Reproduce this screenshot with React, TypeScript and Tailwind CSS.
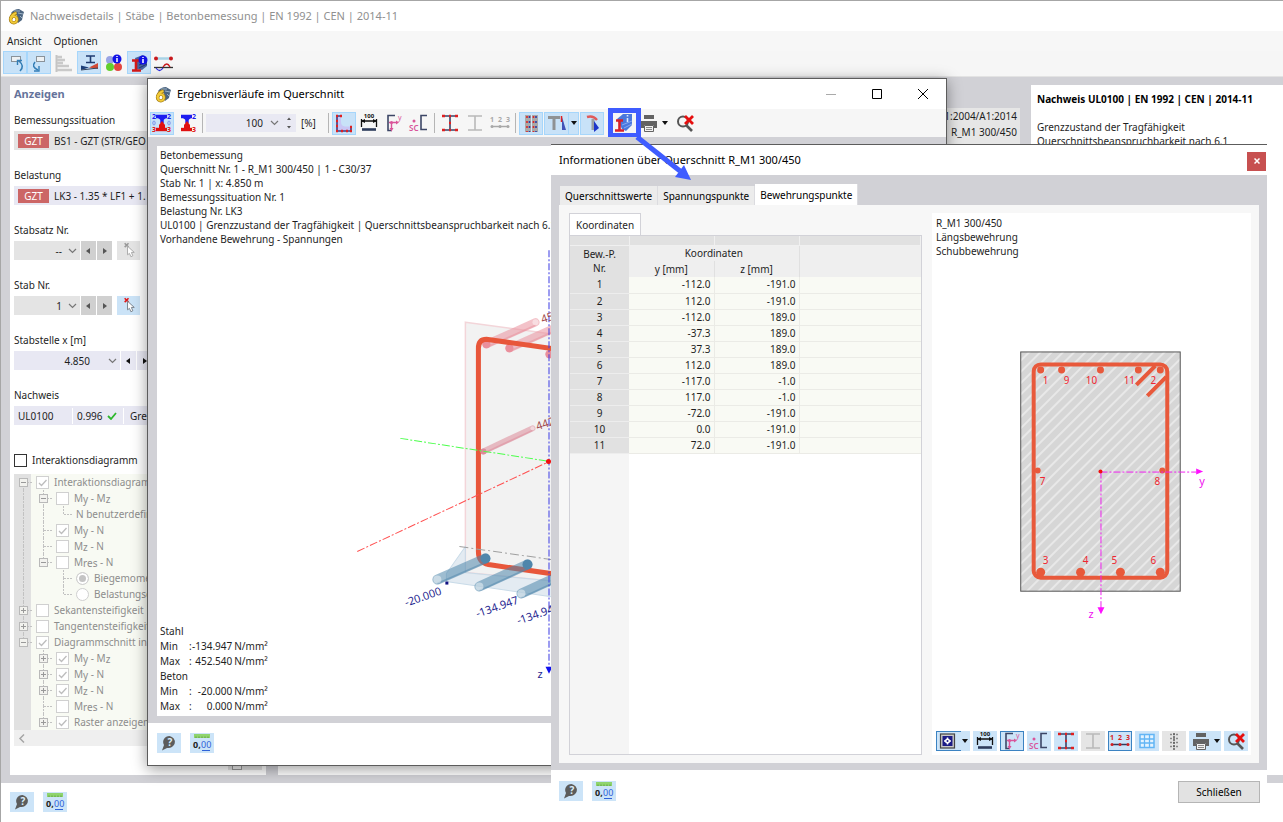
import { useState } from 'react';
import type { ReactNode } from 'react';
import clsx from 'clsx';

const FONT = "font-['Noto_Sans','Open_Sans',sans-serif]";

type Cell = 'minus' | 'plus' | 'line' | 'tee' | 'ell' | 'blank';

interface TreeRow {
  cells: Cell[];
  control?: 'checkbox' | 'radio';
  checked?: boolean;
  label: ReactNode;
  name: string;
  last?: boolean;
}

const sub = (text: string) => <span className="relative top-px">{text}</span>;

const myMz = <>M{sub('y')} - M{sub('z')}</>;
const myN = <>M{sub('y')} - N</>;
const mzN = <>M{sub('z')} - N</>;
const mresN = <>M{sub('res')} - N</>;

const TREE: TreeRow[] = [
  { cells: ['minus'], control: 'checkbox', checked: true, label: 'Interaktionsdiagram', name: 'tree-interaktion' },
  { cells: ['line', 'minus'], control: 'checkbox', label: myMz, name: 'tree-my-mz' },
  { cells: ['line', 'line', 'ell'], label: 'N benutzerdefin', name: 'tree-n' },
  { cells: ['line', 'tee'], control: 'checkbox', checked: true, label: myN, name: 'tree-my-n' },
  { cells: ['line', 'tee'], control: 'checkbox', label: mzN, name: 'tree-mz-n' },
  { cells: ['line', 'minus'], control: 'checkbox', label: mresN, name: 'tree-mres-n', last: true },
  { cells: ['line', 'blank', 'tee'], control: 'radio', checked: true, label: 'Biegemome', name: 'tree-biege' },
  { cells: ['line', 'blank', 'ell'], control: 'radio', label: 'Belastungse', name: 'tree-belast' },
  { cells: ['plus'], control: 'checkbox', label: 'Sekantensteifigkeit', name: 'tree-sekanten' },
  { cells: ['plus'], control: 'checkbox', label: 'Tangentensteifigkeit', name: 'tree-tangenten' },
  { cells: ['minus'], control: 'checkbox', checked: true, label: 'Diagrammschnitt in', name: 'tree-schnitt', last: true },
  { cells: ['blank', 'plus'], control: 'checkbox', checked: true, label: myMz, name: 'tree-s-my-mz' },
  { cells: ['blank', 'plus'], control: 'checkbox', checked: true, label: myN, name: 'tree-s-my-n' },
  { cells: ['blank', 'plus'], control: 'checkbox', checked: true, label: mzN, name: 'tree-s-mz-n' },
  { cells: ['blank', 'tee'], control: 'checkbox', label: mresN, name: 'tree-s-mres-n' },
  { cells: ['blank', 'plus'], control: 'checkbox', checked: true, label: 'Raster anzeigen', name: 'tree-raster', last: true },
];

const POINTS = [
  ['-112.0', '-191.0'],
  ['112.0', '-191.0'],
  ['-112.0', '189.0'],
  ['-37.3', '189.0'],
  ['37.3', '189.0'],
  ['112.0', '189.0'],
  ['-117.0', '-1.0'],
  ['117.0', '-1.0'],
  ['-72.0', '-191.0'],
  ['0.0', '-191.0'],
  ['72.0', '-191.0'],
];

/* ---------- icons, all on a 24 x 22 grid ---------- */

function Icon({ children }: { children: ReactNode }) {
  return (
    <svg viewBox="0 0 24 22" className="h-[22px] w-6 shrink-0" fill="none">
      {children}
    </svg>
  );
}

function Logo() {
  return (
    <svg viewBox="0 0 17 17" className="size-[17px] shrink-0" fill="none">
      <path d="M3 5 Q6 1 11 1 L16 4 L15 7 L14 12 L10 15 L9 7 L5 7 Z" fill="#4c6580" />
      <path d="M6 3 L12 3 M10 5 L15 6 M12 8 L14 10" stroke="#9db2c6" />
      <path d="M8.500 5 Q3.500 6 2.500 11.500" stroke="#a17a14" strokeWidth="3.600" />
      <circle cx="5.800" cy="11.500" r="3.300" stroke="#a17a14" strokeWidth="3.200" />
      <path d="M8.500 5 Q3.500 6 2.500 11.500" stroke="#f2cb38" strokeWidth="2.200" />
      <circle cx="5.800" cy="11.500" r="3.200" stroke="#f2cb38" strokeWidth="2" />
    </svg>
  );
}

const UndoIcon = () => (
  <Icon>
    <rect x="8.500" y="4.500" width="9" height="5" fill="#eef1f3" stroke="#8a9299" />
    <path d="M17 19 Q22 14 16 9" stroke="#347eb6" strokeWidth="1.600" />
    <path d="M19 8.500 H14.500 V13" stroke="#347eb6" strokeWidth="1.400" />
  </Icon>
);

const RedoIcon = () => (
  <Icon>
    <rect x="9.500" y="4.500" width="8" height="5" fill="#eef1f3" stroke="#8a9299" />
    <path d="M8 10 Q4 15 11 18" stroke="#347eb6" strokeWidth="1.600" />
    <path d="M12 14 V19 H7" stroke="#347eb6" strokeWidth="1.400" />
  </Icon>
);

const BarsIcon = () => (
  <Icon>
    <path d="M4.500 3 V20" stroke="#c4c4c4" strokeWidth="2" />
    <path d="M5 5 H10 M5 8 H13 M5 11 H11 M5 14 H17 M5 18 H20" stroke="#c9c9c9" strokeWidth="2.400" />
  </Icon>
);

const StressIcon = () => (
  <Icon>
    <path d="M9 4 H18 M9 10.500 H18 M13.500 4 V10.500" stroke="#1f3b70" strokeWidth="1.600" />
    <path d="M4 13.500 L12 15.500 L4 18 Z" fill="#1d3f78" />
    <path d="M12 15.500 L21 11 V17 Z" fill="#d24a35" />
    <path d="M4 18 L21 16" stroke="#33435d" />
  </Icon>
);

function InfoBadge({ x, y }: { x: number; y: number }) {
  return (
    <g>
      <circle cx={x} cy={y} r="4.500" fill="#1212e6" />
      <path d={`M${x} ${y - 1} V${y + 3} M${x} ${y - 3} V${y - 2}`} stroke="#fff" strokeWidth="1.500" />
    </g>
  );
}

const ColorsIcon = () => (
  <Icon>
    <circle cx="8" cy="8" r="4" fill="#9aa4e4" />
    <circle cx="8" cy="15" r="4" fill="#63cf2e" />
    <circle cx="16" cy="15" r="4" fill="#e2463f" />
    <InfoBadge x={15} y={7} />
  </Icon>
);

const SectionInfoIcon = () => (
  <Icon>
    <path d="M8 6 L16 3 L20 7 V14 L15 18 L10 17 Z" fill="#47639f" />
    <path d="M12 13 L20 10 M12 16 L20 12" stroke="#1f3870" />
    <path d="M5 8.500 H12 M5 18.500 H14 M9 8 V18" stroke="#d01818" strokeWidth="2.600" />
    <InfoBadge x={16} y={8} />
  </Icon>
);

const SectionBlueIcon = () => (
  <Icon>
    <path d="M5 7 L11 2 H20 V13 L14 19 L10 17 Z" fill="#4a78dd" />
    <path d="M10 13 L20 9 M12 16 L20 12" stroke="#88a9f2" />
    <path d="M15.500 6 V10 M15.500 3 V4.500" stroke="#dbe8ff" strokeWidth="1.600" />
    <path d="M4 8.500 H11 M3 18.500 H12 M7.500 9 V18" stroke="#d8202a" strokeWidth="2.600" />
  </Icon>
);

const CurveIcon = () => (
  <Icon>
    <path d="M4 6.500 H19" stroke="#a9d3e6" strokeWidth="2.500" />
    <circle cx="4" cy="6.500" r="2" fill="#c8191d" />
    <circle cx="19" cy="6.500" r="2" fill="#c8191d" />
    <path d="M2 15.500 H21" stroke="#333" strokeWidth="1.300" />
    <path d="M4 16 Q7.500 21 11 16" stroke="#2a2ae0" strokeWidth="1.300" />
    <path d="M11 15 Q15 9 18 15" stroke="#c8191d" strokeWidth="1.300" />
  </Icon>
);

function ProfileNumbersIcon({ both }: { both?: boolean }) {
  return (
    <Icon>
      <path d="M6 4.500 H17 M12 5 V11" stroke="#1c1cf0" strokeWidth="3.400" />
      <path d="M8 6 H16 L12 9 Z" fill="#1c1cf0" />
      <path d="M12 9 L15 13 V16 H9 V13 Z" fill="#e01010" />
      <path d="M6 17.500 H17" stroke="#e01010" strokeWidth="3.400" />
      <text x="17" y="7" fontSize="7" fontWeight="700" fill="#1c1cf0">2</text>
      <text x="17" y="20" fontSize="7" fontWeight="700" fill="#e01010">3</text>
      {both && (
        <>
          <text x="2" y="7" fontSize="7" fontWeight="700" fill="#1c1cf0">2</text>
          <text x="2" y="20" fontSize="7" fontWeight="700" fill="#e01010">3</text>
          <ellipse cx="4" cy="11" rx="1.200" ry="2" stroke="#7c93ec" />
          <ellipse cx="19" cy="11" rx="1.200" ry="2" stroke="#7c93ec" />
        </>
      )}
    </Icon>
  );
}

const CornerIcon = () => (
  <Icon>
    <path d="M5 4 H9 V10 Q9 14 13 14.500 H19 V19 H5 Z" fill="#c9c6f5" />
    <path d="M9 4 H5 V19 H19 V15" stroke="#3c3c80" strokeWidth="1.600" />
    <path
      d="M4 4 H6 M4 9 H6 M4 14 H6 M4 19 H6 M9 19 H11 M14 19 H16 M18 19 H20 M18 15 H20 M8 4 H10"
      stroke="#e02020"
      strokeWidth="2.400"
    />
  </Icon>
);

const DimensionIcon = () => (
  <Icon>
    <text x="12" y="6" fontSize="6" fontWeight="700" textAnchor="middle" fill="#111">100</text>
    <path d="M4 9 H20 M4.500 7 V15 M19.500 7 V15" stroke="#111" strokeWidth="1.300" />
    <path d="M4 9 L8 7 V11 Z M20 9 L16 7 V11 Z" fill="#111" />
    <path d="M5 17.500 H19" stroke="#2e3c5c" strokeWidth="2.600" />
  </Icon>
);

const AxesIcon = () => (
  <Icon>
    <path d="M13 3.500 H6 V18.500 H10" stroke="#3c4666" strokeWidth="1.600" />
    <path d="M7 10.500 H15 M9.500 10 V17" stroke="#d9559a" strokeWidth="1.400" />
    <path d="M14 8.500 L17 10.500 L14 12.500 Z M7.500 16 H11.500 L9.500 19.500 Z" fill="#d9559a" />
    <circle cx="9.500" cy="10.500" r="1.500" fill="#d9559a" />
    <text x="16" y="8" fontSize="7" fill="#d9559a">y</text>
  </Icon>
);

const ShearCenterIcon = () => (
  <Icon>
    <path d="M20 3.500 H14 V17.500 H20" stroke="#3c4666" strokeWidth="1.600" />
    <circle cx="7" cy="9" r="1.500" fill="#d9559a" />
    <text x="2" y="19" fontSize="8" fontWeight="600" fill="#d9559a">SC</text>
  </Icon>
);

function BeamIcon({ gray }: { gray?: boolean }) {
  return (
    <Icon>
      <path d="M5 4 H19 M5 18 H19 M12 4 V18" stroke={gray ? '#b9b9b9' : '#3a4468'} strokeWidth="1.600" />
      {!gray && (
        <path
          d="M4 4 H7 M11 4 H13 M17 4 H20 M4 18 H7 M11 18 H13 M17 18 H20 M11 11 H13"
          stroke="#e02020"
          strokeWidth="2.600"
        />
      )}
    </Icon>
  );
}

function NumbersIcon({ gray }: { gray?: boolean }) {
  const color = gray ? '#a8a8a8' : '#d61f1f';
  return (
    <Icon>
      <text x="2" y="10" fontSize="7" fontWeight="700" fill={color}>1</text>
      <text x="10" y="10" fontSize="7" fontWeight="700" fill={color}>2</text>
      <text x="18" y="10" fontSize="7" fontWeight="700" fill={color}>3</text>
      <path d="M4 14.500 H20" stroke={gray ? '#a8a8a8' : '#2e3c5c'} strokeWidth="1.500" />
      <circle cx="4" cy="14.500" r="1.500" fill={color} />
      <circle cx="12" cy="14.500" r="1.500" fill={color} />
      <circle cx="20" cy="14.500" r="1.500" fill={color} />
    </Icon>
  );
}

const RebarIcon = () => (
  <Icon>
    <path d="M6 3 H12 V20 H6 Z M13 3 H19 V20 H13 Z" fill="#a9a9a9" />
    <path d="M8 4 V20 M14.500 4 V20" stroke="#e02626" strokeWidth="1.600" strokeDasharray="2 3" />
    <path d="M10.500 4 V20 M17 4 V20" stroke="#2c3ea6" strokeWidth="1.600" strokeDasharray="2 3" />
    <path d="M12.500 3 V20" stroke="#d8eafa" />
  </Icon>
);

const TeeIcon = () => (
  <Icon>
    <path d="M4 5.500 H16 M10 6 V18" stroke="#8f9294" strokeWidth="3" />
    <path d="M18 5 L22 18 H18 Z" fill="#4052b8" />
    <path d="M17.500 4 V10" stroke="#e02020" strokeWidth="1.500" />
  </Icon>
);

const HammerIcon = () => (
  <Icon>
    <path d="M7 5 Q13 3 17 8" stroke="#e05a5a" strokeWidth="2.400" />
    <path d="M13 7 V18" stroke="#999fa3" strokeWidth="3" />
    <path d="M14 9 L19 16 L14 20 Z" fill="#1d35c9" />
  </Icon>
);

const PrinterIcon = () => (
  <Icon>
    <path d="M7 3 H17 V7 H7 Z M4 9 H20 V16 H17 V13 H7 V16 H4 Z" fill="#636363" />
    <path d="M7.500 13.500 H16.500 V19.500 H7.500 Z" fill="#f2f2f2" stroke="#636363" />
    <path d="M9 15.500 H15 M9 17.500 H15" stroke="#8a8a8a" />
  </Icon>
);

const SearchXIcon = () => (
  <Icon>
    <circle cx="10" cy="9.500" r="5" stroke="#555" strokeWidth="2" />
    <path d="M13.500 13.500 L19 19" stroke="#555" strokeWidth="2.600" />
    <path d="M12 4 L20 12 M20 4 L12 12" stroke="#e60f0f" strokeWidth="2.800" />
  </Icon>
);

const SelectBoxIcon = () => (
  <Icon>
    <rect x="3.500" y="4" width="14" height="14" fill="#c9c9c9" stroke="#444" strokeWidth="1.200" />
    <rect x="5.500" y="6" width="10" height="10" fill="#1c1c86" />
    <path d="M10.500 7.500 V14.500 M7 11 H14" stroke="#fff" strokeWidth="1.500" />
    <circle cx="10.500" cy="11" r="2.500" fill="#fff" />
    <circle cx="10.500" cy="11" r="1" fill="#1c1c86" />
  </Icon>
);

const GridIcon = () => (
  <Icon>
    <rect x="5" y="4.500" width="14" height="13" fill="#e3f3ff" stroke="#62b5f5" strokeWidth="1.500" />
    <path d="M9.500 4 V18 M14.500 4 V18 M5 9 H19 M5 13 H19" stroke="#62b5f5" strokeWidth="1.300" />
  </Icon>
);

const DotsColumnIcon = () => (
  <Icon>
    <path d="M8 4.500 H16 M8 8.500 H16 M8 12.500 H16 M8 16.500 H16" stroke="#8a8a8a" strokeWidth="1.500" strokeDasharray="2 1" />
    <path d="M12 3 V20" stroke="#5f5f5f" strokeWidth="1.500" strokeDasharray="2 1" />
  </Icon>
);

const HelpIcon = () => (
  <Icon>
    <path d="M12.500 4 A6.500 6 0 1 1 10 16 L5 18.500 L7 13 A6.500 6 0 0 1 12.500 4 Z" fill="#5c5c5c" />
    <text x="13" y="14" fontSize="10" fontWeight="700" textAnchor="middle" fill="#d9ecfb">?</text>
  </Icon>
);

const DecimalsIcon = () => (
  <Icon>
    <rect x="4" y="2" width="16" height="4" fill="#8fd46d" />
    <path d="M6 4.500 V6 M9 4.500 V6 M12 4.500 V6 M15 4.500 V6 M18 4.500 V6" stroke="#5c9c42" />
    <text x="3" y="16" fontSize="9" fontWeight="700" fill="#222">0,</text>
    <text x="11" y="16" fontSize="9" fill="#2f62d8">00</text>
    <path d="M12 18.500 H20" stroke="#2f62d8" />
  </Icon>
);

const Caret = () => (
  <svg viewBox="0 0 8 5" className="h-[5px] w-2 shrink-0">
    <path d="M1 0 H7 L4 4 Z" fill="#111" />
  </svg>
);

const Chevron = () => (
  <svg viewBox="0 0 9 6" className="h-1.5 w-[9px] shrink-0" fill="none">
    <path d="M1 1 L4.500 4.500 L8 1" stroke="#777" strokeWidth="1.200" />
  </svg>
);

function Pointer({ active }: { active?: boolean }) {
  return (
    <svg viewBox="0 0 24 19" className="h-[19px] w-[23px]" fill="none">
      <path d="M8 2 L12 6 M12 2 L8 6" stroke={active ? '#e01818' : '#999'} strokeWidth="1.600" />
      <path
        d="M11 5 V14 L13 12.500 L14.500 16 L16.500 15 L15 11.500 L18 11.500 Z"
        fill="#fff"
        stroke={active ? '#78818a' : '#a9a9a9'}
      />
    </svg>
  );
}

/* ---------- small building blocks ---------- */

interface ToolProps {
  label: string;
  on?: boolean;
  children: ReactNode;
}

function Tool({ label, on, children }: ToolProps) {
  return (
    <button
      type="button"
      aria-label={label}
      className={clsx(
        'flex h-[23px] shrink-0 items-center justify-center',
        on && 'bg-[#c8e2f8] outline outline-1 -outline-offset-1 outline-[#a6d6fb]'
      )}
    >
      {children}
    </button>
  );
}

const Divider = () => <span className="mx-[3px] h-5 w-px shrink-0 bg-[#b5b5b5]" />;

function FootTools() {
  return (
    <div className="flex gap-[9px]">
      <button type="button" aria-label="Hilfe" className="flex h-5 w-6 items-center bg-[#cce4f8]">
        <HelpIcon />
      </button>
      <button type="button" aria-label="Dezimalstellen" className="flex h-5 w-6 items-center bg-[#cce4f8]">
        <DecimalsIcon />
      </button>
    </div>
  );
}

function Stepper({ dark }: { dark?: boolean }) {
  const cls = clsx('flex h-[19px] w-[15px] items-center justify-center', dark ? 'bg-[#e8e8f3]' : 'bg-[#d0d0d0]');
  const fill = dark ? '#111' : '#555';
  return (
    <>
      <button type="button" aria-label="Zurück" className={cls}>
        <svg viewBox="0 0 5 8" className="h-2 w-[5px]"><path d="M4 1 V7 L0 4 Z" fill={fill} /></svg>
      </button>
      <button type="button" aria-label="Weiter" className={cls}>
        <svg viewBox="0 0 5 8" className="h-2 w-[5px]"><path d="M1 1 V7 L5 4 Z" fill={fill} /></svg>
      </button>
    </>
  );
}

function Field({ label, children }: { label: string; children: ReactNode }) {
  return (
    <div className="mb-[15px]" role="group" aria-label={label}>
      <div className="h-[21px] leading-5">{label}</div>
      <div className="flex h-[19px] items-center gap-px">{children}</div>
    </div>
  );
}

function Combo({ value, className }: { value: string; className: string }) {
  return (
    <button type="button" className={clsx('flex h-[19px] items-center justify-end gap-1.5', className)}>
      {value}
      <Chevron />
    </button>
  );
}

function LoadCase({ tone, text }: { tone: string; text: string }) {
  return (
    <button type="button" className={clsx('flex h-[19px] w-full items-center gap-[5px] pl-1', tone)}>
      <span className="h-[14px] w-[31px] bg-[#cc6666] text-center leading-[14px] text-white">GZT</span>
      {text}
    </button>
  );
}

function TreeCell({ kind, first, last }: { kind: Cell; first: boolean; last?: boolean }) {
  const box = kind === 'minus' || kind === 'plus';
  return (
    <svg viewBox="0 0 20 16" className="h-4 w-5 shrink-0" fill="none" stroke="#c2c2c2">
      {kind !== 'blank' && !(box && first) && <path d="M9.500 0 V8" strokeDasharray="2 1" />}
      {kind !== 'blank' && kind !== 'ell' && !last && <path d="M9.500 8 V16" strokeDasharray="2 1" />}
      {kind !== 'blank' && kind !== 'line' && <path d="M10 8.500 H19" strokeDasharray="2 1" />}
      {box && <rect x="5.500" y="4.500" width="8" height="8" fill="#f2f2ee" stroke="#b9b9b9" />}
      {box && <path d="M7 8.500 H12" stroke="#999" />}
      {kind === 'plus' && <path d="M9.500 6 V11" stroke="#999" />}
    </svg>
  );
}

function Tick() {
  return (
    <svg viewBox="0 0 13 13" className="pointer-events-none absolute inset-0 size-[13px]" fill="none">
      <path d="M3 7 L5.500 9.500 L10.500 4" stroke="#bdbdbd" strokeWidth="1.300" />
    </svg>
  );
}

function Tree() {
  return (
    <ul className="bg-[linear-gradient(to_right,#e1e1e1_17px,#f8faf3_17px)] text-[#8d8d8d]">
      {TREE.map((row, i) => (
        <li key={row.name} className="flex h-4 items-center overflow-hidden whitespace-nowrap">
          {row.cells.map((kind, c) => (
            <TreeCell
              key={c}
              kind={kind}
              first={i === 0}
              last={(row.last && c === row.cells.length - 1) || kind === 'ell'}
            />
          ))}
          {row.control && (
            <span className="relative ml-0.5 mr-[5px] size-[13px] shrink-0">
              <input
                id={row.name}
                type={row.control}
                name={row.control === 'radio' ? 'ebene' : row.name}
                defaultChecked={row.checked}
                disabled
                className={clsx(
                  'block size-[13px] appearance-none border border-[#d0d0d0] bg-white',
                  row.control === 'radio' && 'rounded-full checked:shadow-[inset_0_0_0_2px_#fff] checked:bg-[#c4c4c4]'
                )}
              />
              {row.control === 'checkbox' && row.checked && <Tick />}
            </span>
          )}
          {row.control ? <label htmlFor={row.name}>{row.label}</label> : <span className="ml-0.5">{row.label}</span>}
        </li>
      ))}
    </ul>
  );
}

/* ---------- main window ---------- */

function SidePanel() {
  const [interaction, setInteraction] = useState(false);
  return (
    <section className="flex w-64 shrink-0 flex-col bg-white pl-1">
      <h2 className="h-[25px] pt-px text-[11px] font-bold leading-4 text-[#65739b]">Anzeigen</h2>
      <Field label="Bemessungssituation">
        <LoadCase tone="bg-[#e4e4e4]" text="BS1 - GZT (STR/GEO" />
      </Field>
      <Field label="Belastung">
        <LoadCase tone="bg-[#e8e8f3]" text="LK3 - 1.35 * LF1 + 1." />
      </Field>
      <Field label="Stabsatz Nr.">
        <Combo value="--" className="w-[66px] bg-[#e4e4e4] pr-[3px]" />
        <Stepper />
        <button type="button" aria-label="Stabsatz wählen" className="ml-1 bg-[#e4e4e4]"><Pointer /></button>
      </Field>
      <Field label="Stab Nr.">
        <Combo value="1" className="w-[66px] bg-[#e4e4e4] pr-[3px]" />
        <Stepper />
        <button type="button" aria-label="Stab wählen" className="ml-1 bg-[#cbe3f7]"><Pointer active /></button>
      </Field>
      <Field label="Stabstelle x [m]">
        <button type="button" className="flex h-[19px] w-[106px] items-center justify-end gap-[18px] bg-[#e8e8f3] pr-[3px]">
          4.850
          <Chevron />
        </button>
        <Stepper dark />
      </Field>
      <Field label="Nachweis">
        <div className="flex h-[19px] w-full items-center bg-[#e8e8f3]">
          <span className="w-[58px] pl-1">UL0100</span>
          <span className="flex h-4 w-[52px] items-center gap-1 border-x border-white pl-1">
            0.996
            <svg viewBox="0 0 10 8" className="h-2 w-2.5" fill="none">
              <path d="M1 4 L4 7 L9 1" stroke="#2db82d" strokeWidth="1.800" />
            </svg>
          </span>
          <span className="pl-1.5">Gre</span>
        </div>
      </Field>
      <div className="mb-1.5 mt-3 flex h-4 items-center gap-[5px]">
        <input
          id="interaktion"
          type="checkbox"
          checked={interaction}
          onChange={(e) => setInteraction(e.target.checked)}
          className="size-[13px] appearance-none border border-[#333] bg-white checked:bg-[#333]"
        />
        <label htmlFor="interaktion">Interaktionsdiagramm</label>
      </div>
      <Tree />
      <div className="h-4 bg-[#efefef] pl-1">
        <svg viewBox="0 0 8 16" className="h-4 w-2" fill="none">
          <path d="M6 4.500 L2 8.500 L6 12.500" stroke="#a5a5a5" strokeWidth="1.500" />
        </svg>
      </div>
      <div className="mb-[5px] mr-1 mt-auto flex h-5 w-[34px] items-end self-end bg-[#e2e2e2] pl-1">
        <span className="h-4 w-2.5 border border-[#999] bg-[#eee]" />
      </div>
    </section>
  );
}

function MainWindow() {
  return (
    <div className="flex h-screen flex-col border-l border-t border-[#a6a6a6] bg-white">
      <header className="flex h-[30px] shrink-0 items-center gap-[5px] pl-[7px] text-[11px] text-[#909090]">
        <Logo />
        <h1>Nachweisdetails | Stäbe | Betonbemessung | EN 1992 | CEN | 2014-11</h1>
      </header>
      <nav className="flex h-5 shrink-0 items-center gap-3 bg-[#f7f7f7] pl-1.5">
        <button type="button">Ansicht</button>
        <button type="button">Optionen</button>
      </nav>
      <div className="flex h-[26px] shrink-0 items-start gap-px border-b border-[#e3e3e3] bg-[#f6f6f6] pl-0.5">
        <div className="flex">
          <Tool label="Zurück" on><UndoIcon /></Tool>
          <Tool label="Vor" on><RedoIcon /></Tool>
        </div>
        <Tool label="Balken"><BarsIcon /></Tool>
        <Tool label="Spannungsverlauf" on><StressIcon /></Tool>
        <Tool label="Farben"><ColorsIcon /></Tool>
        <Tool label="Querschnittsinfo" on><SectionInfoIcon /></Tool>
        <Tool label="Verlauf"><CurveIcon /></Tool>
      </div>
      <main className="flex min-h-0 flex-1 bg-[#d1d1d6] pb-2 pl-[9px] pt-2">
        <SidePanel />
        <section className="ml-3 mr-[11px] flex min-w-0 flex-1 flex-col">
          <div className="mb-6 mt-[23px] bg-[#e6e6e6] pb-5 pr-[3px] text-right leading-4">
            <div>1:2004/A1:2014</div>
            <div>R_M1 300/450</div>
          </div>
          <div className="flex-1 bg-white" />
        </section>
        <section className="w-[252px] shrink-0 bg-white pl-1.5 pt-1.5 leading-[14px]">
          <h2 className="mb-[13px] font-bold leading-4 text-black">Nachweis UL0100 | EN 1992 | CEN | 2014-11</h2>
          <p>Grenzzustand der Tragfähigkeit</p>
          <p>Querschnittsbeanspruchbarkeit nach 6.1</p>
        </section>
      </main>
      <footer className="h-[39px] shrink-0 pl-[9px] pt-[9px]">
        <FootTools />
      </footer>
    </div>
  );
}

/* ---------- stress window ---------- */

function Rod({ x, y, dx, dy, color, r = 5 }: {
  x: number; y: number; dx: number; dy: number; color: string; r?: number;
}) {
  return (
    <g>
      <path d={`M${x} ${y} L${x + dx} ${y + dy}`} stroke={color} strokeWidth={r * 2} strokeOpacity="0.550" strokeLinecap="round" />
      <path d={`M${x} ${y + r - 1} L${x + dx} ${y + dy + r - 1}`} stroke={color} strokeOpacity="0.500" strokeWidth="1.500" />
      <circle cx={x} cy={y} r={r} fill={color} />
      <circle cx={x + dx} cy={y + dy} r={r - 1} fill="#fff" fillOpacity="0.450" />
    </g>
  );
}

function StressPlot() {
  return (
    <svg viewBox="157 146 780 570" preserveAspectRatio="xMinYMin slice" className="absolute inset-0 size-full" fill="none">
      <path d="M465 322 L640 346 V589 L465 572 Z" fill="#f2f2f2" stroke="#f3d5d9" strokeWidth="1.500" />
      <path d="M465 546 L446 573 V581 L640 609 V589 L465 572 Z" fill="#dce6ef" fillOpacity="0.800" stroke="#c9dbe8" />
      <Rod x={486} y={344} dx={49} dy={-22} color="#ea8f9c" r={4} />
      <Rod x={509} y={348} dx={49} dy={-22} color="#ea8f9c" r={4} />
      <Rod x={549} y={354} dx={49} dy={-22} color="#ea8f9c" r={4} />
      <path d="M640 361 L486 339 Q478 339 478 348 V551 Q478 562 488 564 L640 586" stroke="#e8563a" strokeWidth="5" />
      <Rod x={483} y={451} dx={49} dy={-23} color="#dd8a99" r={3} />
      <path d="M459 546 L600 566" stroke="#a0a0a0" strokeDasharray="9 3 2 3" />
      <Rod x={485} y={558} dx={-48} dy={21} color="#4f86ab" />
      <Rod x={527} y={564} dx={-48} dy={22} color="#4f86ab" />
      <Rod x={569} y={571} dx={-48} dy={22} color="#4f86ab" />
      <rect x="445" y="581" width="3" height="3" fill="#101080" />
      <path d="M400 438 L549 461" stroke="#4cff4c" strokeDasharray="8 2 2 2" />
      <path d="M357 551 L549 461" stroke="#ff5050" strokeDasharray="8 2 2 2" />
      <path d="M548.500 250 V668" stroke="#3a3ae4" strokeDasharray="7 2 2 2" />
      <path d="M545 666 H552 L548.500 673 Z" fill="#1212ee" />
      <circle cx="548" cy="461" r="2.500" fill="#f01010" />
      <g fontSize="11" fill="#1f1f90">
        <text transform="translate(406 606) rotate(-19)">-20.000</text>
        <text transform="translate(477 617) rotate(-19)">-134.947</text>
        <text transform="translate(518 624) rotate(-19)">-134.947</text>
        <text x="537" y="677">z</text>
      </g>
      <g fontSize="11" fill="#a04848">
        <text transform="translate(542 323) rotate(-19)">452</text>
        <text transform="translate(537 430) rotate(-19)">442</text>
      </g>
    </svg>
  );
}

function StressValue({ name, value }: { name: string; value: string }) {
  return (
    <tr className="h-[15px]">
      <th scope="row" className="w-[29px] p-0 text-left font-normal">{name}</th>
      <td className="p-0">:</td>
      <td className="w-10 p-0 text-right">{value}</td>
      <td className="p-0 pl-0.5">N/mm²</td>
    </tr>
  );
}

function StressWindow() {
  return (
    <section className="absolute left-[147px] top-[78px] flex h-[688px] w-[800px] flex-col border border-[#5c5c5c] bg-white shadow-[0_3px_14px_rgba(0,0,0,0.4)]">
      <header className="flex h-[30px] shrink-0 items-center gap-[5px] pl-[7px] pr-[18px] text-[11px] text-black">
        <Logo />
        <h2 className="mr-auto">Ergebnisverläufe im Querschnitt</h2>
        <div className="flex gap-9">
          <button type="button" aria-label="Minimieren">
            <svg viewBox="0 0 10 10" className="size-2.5"><path d="M0 5.500 H10" stroke="#aaa" /></svg>
          </button>
          <button type="button" aria-label="Maximieren">
            <svg viewBox="0 0 10 10" className="size-2.5" fill="none"><path d="M0.500 0.500 H9.500 V9.500 H0.500 Z" stroke="#000" /></svg>
          </button>
          <button type="button" aria-label="Schließen">
            <svg viewBox="0 0 10 10" className="size-2.5"><path d="M0 0 L10 10 M10 0 L0 10" stroke="#000" /></svg>
          </button>
        </div>
      </header>
      <div className="flex h-[28px] shrink-0 items-center bg-[#f6f6f6] pl-0.5">
        <div className="flex gap-px">
          <Tool label="Werte beidseitig" on><ProfileNumbersIcon both /></Tool>
          <Tool label="Werte einseitig"><ProfileNumbersIcon /></Tool>
        </div>
        <Divider />
        <button type="button" className="flex h-[18px] w-[76px] items-center justify-end gap-[7px] bg-[#e9e9f3] pr-[3px]">
          100
          <Chevron />
        </button>
        <button type="button" aria-label="Wert ändern" className="flex h-[18px] w-[14px] items-center justify-center bg-[#e9e9f3]">
          <svg viewBox="0 0 6 12" className="h-3 w-1.5"><path d="M1 3 L3 0.500 L5 3 Z M1 9 L3 11.500 L5 9 Z" fill="#555" /></svg>
        </button>
        <span className="ml-[5px] mr-[9px]">[%]</span>
        <Divider />
        <div className="flex gap-px">
          <Tool label="Kontur" on><CornerIcon /></Tool>
          <Tool label="Maße"><DimensionIcon /></Tool>
          <Tool label="Hauptachsen"><AxesIcon /></Tool>
          <Tool label="Schubmittelpunkt"><ShearCenterIcon /></Tool>
        </div>
        <Divider />
        <div className="flex gap-px">
          <Tool label="Profil rot"><BeamIcon /></Tool>
          <Tool label="Profil grau"><BeamIcon gray /></Tool>
          <Tool label="Nummerierung"><NumbersIcon gray /></Tool>
        </div>
        <Divider />
        <div className="flex gap-px">
          <Tool label="Bewehrung" on><RebarIcon /></Tool>
          <Tool label="Spannungen" on>
            <TeeIcon />
            <span className="flex h-full items-center border-l border-[#a6d6fb] px-px"><Caret /></span>
          </Tool>
          <Tool label="Dehnungen" on><HammerIcon /></Tool>
        </div>
        <div className="ml-1 flex h-[30px] w-[33px] shrink-0 items-center justify-center border-[5px] border-[#3f5cff]">
          <Tool label="Informationen über Querschnitt"><SectionBlueIcon /></Tool>
        </div>
        <Tool label="Drucken"><span className="-ml-1 flex items-center"><PrinterIcon /></span><Caret /></Tool>
        <span className="w-1" />
        <Tool label="Ansicht zurücksetzen"><SearchXIcon /></Tool>
      </div>
      <div className="flex min-h-0 flex-1 bg-[#d1d1d6] pb-[7px] pl-[9px] pr-2 pt-[9px]">
        <div className="relative flex flex-1 flex-col justify-between overflow-hidden bg-white pl-[3px] pt-0.5">
          <StressPlot />
          <div className="relative leading-[14px]">
            <p>Betonbemessung</p>
            <p>Querschnitt Nr. 1 - R_M1 300/450 | 1 - C30/37</p>
            <p>Stab Nr. 1 | x: 4.850 m</p>
            <p>Bemessungssituation Nr. 1</p>
            <p>Belastung Nr. LK3</p>
            <p>UL0100 | Grenzzustand der Tragfähigkeit | Querschnittsbeanspruchbarkeit nach 6.1</p>
            <p>Vorhandene Bewehrung - Spannungen</p>
          </div>
          <table className="relative mb-0.5 w-28 border-collapse whitespace-nowrap leading-[15px]">
            <tbody>
              <tr><th scope="rowgroup" colSpan={4} className="p-0 text-left font-normal">Stahl</th></tr>
              <StressValue name="Min" value="-134.947" />
              <StressValue name="Max" value="452.540" />
              <tr><th scope="rowgroup" colSpan={4} className="p-0 text-left font-normal">Beton</th></tr>
              <StressValue name="Min" value="-20.000" />
              <StressValue name="Max" value="0.000" />
            </tbody>
          </table>
        </div>
      </div>
      <footer className="h-[42px] shrink-0 pl-[9px] pt-2.5">
        <FootTools />
      </footer>
    </section>
  );
}

/* ---------- section info window ---------- */

const BARS = [
  { n: 1, x: 1041, y: 370, r: 3.5, tx: 1046, ty: 384 },
  { n: 9, x: 1062, y: 370, r: 3.5, tx: 1067, ty: 384 },
  { n: 10, x: 1101, y: 370, r: 3.5, tx: 1092, ty: 384 },
  { n: 11, x: 1139, y: 370, r: 3.5, tx: 1130, ty: 384 },
  { n: 2, x: 1161, y: 370, r: 3.5, tx: 1154, ty: 384 },
  { n: 7, x: 1038, y: 471, r: 3, tx: 1043, ty: 485 },
  { n: 8, x: 1163, y: 471, r: 3, tx: 1158, ty: 485 },
  { n: 3, x: 1041, y: 573, r: 4.5, tx: 1046, ty: 565 },
  { n: 4, x: 1081, y: 573, r: 4.5, tx: 1086, ty: 565 },
  { n: 5, x: 1121, y: 573, r: 4.5, tx: 1115, ty: 565 },
  { n: 6, x: 1161, y: 573, r: 4.5, tx: 1154, ty: 565 },
];

function SectionPlot() {
  return (
    <svg viewBox="932 261 320 469" className="min-h-0 w-full flex-1" fill="none">
      <defs>
        <pattern id="hatch" width="8" height="8" patternUnits="userSpaceOnUse" patternTransform="rotate(45)">
          <rect width="8" height="8" fill="#d6d6d6" />
          <path d="M1 0 V8" stroke="#f2f2f2" strokeWidth="1.300" />
        </pattern>
      </defs>
      <rect x="1021" y="352" width="160" height="240" fill="url(#hatch)" stroke="#555" />
      <rect x="1034" y="364.500" width="134" height="214" rx="7" stroke="#e8593b" strokeWidth="4" />
      <path d="M1156 366 L1137 385 M1167 377 L1148 396" stroke="#e8593b" strokeWidth="4" />
      {BARS.map((bar) => (
        <circle key={bar.n} cx={bar.x} cy={bar.y} r={bar.r} fill="#e8593b" />
      ))}
      <g fontSize="10" fill="#f02530" textAnchor="middle">
        {BARS.map((bar) => (
          <text key={bar.n} x={bar.tx} y={bar.ty}>{bar.n}</text>
        ))}
      </g>
      <path d="M1101 472.500 H1197 M1101.500 472 V609" stroke="#f020f0" strokeDasharray="7 2 2 2" />
      <path d="M1197 469 V475 L1204 472 Z M1098 608 H1105 L1101.500 615 Z" fill="#ff10ff" />
      <circle cx="1101" cy="472" r="2" fill="#f01010" />
      <g fontSize="11" fill="#f010f0">
        <text x="1200" y="485">y</text>
        <text x="1089" y="619">z</text>
      </g>
    </svg>
  );
}

function SmallTool({ label, framed, gray, children }: {
  label: string; framed?: boolean; gray?: boolean; children: ReactNode;
}) {
  return (
    <button
      type="button"
      aria-label={label}
      className={clsx(
        'flex h-5 shrink-0 items-center justify-center overflow-hidden',
        gray ? 'bg-[#e5e5e5]' : 'bg-[#cce4f8]',
        framed && 'outline outline-1 -outline-offset-1 outline-[#3c83c2]'
      )}
    >
      {children}
    </button>
  );
}

function CoordinateTable() {
  const head = 'border-r border-[#e0e0e0] bg-[#efefef] p-0 text-center font-normal';
  const cell = 'border-b border-r border-[#ebebe6] bg-[#f9faf4] p-0 pr-[3px] text-right';
  return (
    <div className="flex min-h-0 flex-1 flex-col border border-[#d2d2d8] bg-[linear-gradient(to_right,#f5f5f5_59px,#fff_59px)]">
      <table className="w-full table-fixed border-collapse">
        <colgroup>
          <col className="w-[59px]" />
          <col className="w-[85px]" />
          <col className="w-[85px]" />
          <col />
        </colgroup>
        <thead>
          <tr className="h-[9px] bg-[#e1e1e1]">
            {[0, 1, 2, 3].map((c) => <td key={c} className="border-r border-b border-[#f0f0f0] p-0" />)}
          </tr>
          <tr className="h-4 leading-[15px]">
            <th scope="col" rowSpan={2} className="bg-[#e1e1e1] p-0 text-center font-normal leading-[14px]">
              Bew.-P.<br />Nr.
            </th>
            <th scope="colgroup" colSpan={2} className={head}>Koordinaten</th>
            <td rowSpan={2} className="bg-[#efefef] p-0" />
          </tr>
          <tr className="h-4 leading-[15px]">
            <th scope="col" className={head}>y [mm]</th>
            <th scope="col" className={head}>z [mm]</th>
          </tr>
        </thead>
        <tbody>
          {POINTS.map(([y, z], i) => (
            <tr key={i} className="h-4 leading-[15px]">
              <th scope="row" className="border-b border-[#ededed] bg-[#e1e1e1] p-0 text-center font-normal">{i + 1}</th>
              <td className={cell}>{y}</td>
              <td className={cell}>{z}</td>
              <td className="border-b border-[#ebebe6] bg-[#f9faf4] p-0" />
            </tr>
          ))}
        </tbody>
      </table>
    </div>
  );
}

function SectionWindow() {
  const [tab, setTab] = useState('Bewehrungspunkte');
  return (
    <section className="absolute bottom-0 left-[551px] right-4 top-[144px] flex flex-col border-t border-[#5c5c5c] bg-white">
      <header className="flex h-[30px] shrink-0 items-center justify-between pl-2 pr-px text-[11px] text-black">
        <h2>Informationen über Querschnitt R_M1 300/450</h2>
        <button type="button" aria-label="Fenster schließen" className="mt-0.5 flex size-[19px] items-center justify-center bg-[#c75050]">
          <svg viewBox="0 0 6 6" className="size-1.5"><path d="M0.500 0.500 L5.500 5.500 M5.500 0.500 L0.500 5.500" stroke="#fff" strokeWidth="1.500" /></svg>
        </button>
      </header>
      <div className="flex min-h-0 flex-1 flex-col bg-[#d1d1d6] px-2 pb-[7px] pt-[9px]">
        <div className="flex items-end pl-px" role="tablist">
          {['Querschnittswerte', 'Spannungspunkte', 'Bewehrungspunkte'].map((name) => (
            <button
              key={name}
              type="button"
              role="tab"
              aria-selected={tab === name}
              onClick={() => setTab(name)}
              className={clsx(
                'border-r border-[#dcdce0] px-[5px] text-black',
                tab === name ? 'h-[21px] bg-white' : 'h-[19px] bg-[#ececec]'
              )}
            >
              {name}
            </button>
          ))}
        </div>
        <div className="flex min-h-0 flex-1 gap-2.5 bg-[#f7f7f7] px-2 py-2 pl-[10px]">
          <div className="flex w-[353px] shrink-0 flex-col">
            <button
              type="button"
              className="h-[22px] self-start border border-b-0 border-[#d2d2d8] bg-white px-1.5"
            >
              Koordinaten
            </button>
            <CoordinateTable />
          </div>
          <div className="flex min-w-0 flex-1 flex-col bg-white">
            <div className="h-[46px] pl-1 pt-[3px] leading-[14px]">
              <p>R_M1 300/450</p>
              <p>Längsbewehrung</p>
              <p>Schubbewehrung</p>
            </div>
            <SectionPlot />
            <div className="mb-1 flex items-center gap-[3px] pl-1">
              <SmallTool label="Auswahl">
                <span className="flex h-full items-center border border-r-0 border-[#3c83c2]"><SelectBoxIcon /></span>
                <Caret />
                <span className="w-px" />
              </SmallTool>
              <SmallTool label="Maße"><DimensionIcon /></SmallTool>
              <SmallTool label="Hauptachsen" framed><AxesIcon /></SmallTool>
              <SmallTool label="Schubmittelpunkt"><ShearCenterIcon /></SmallTool>
              <SmallTool label="Profil"><BeamIcon /></SmallTool>
              <SmallTool label="Profil grau" gray><BeamIcon gray /></SmallTool>
              <SmallTool label="Nummerierung" framed><NumbersIcon /></SmallTool>
              <SmallTool label="Raster"><GridIcon /></SmallTool>
              <SmallTool label="Punkte" gray><DotsColumnIcon /></SmallTool>
              <SmallTool label="Drucken"><PrinterIcon /><Caret /></SmallTool>
              <SmallTool label="Ansicht zurücksetzen"><SearchXIcon /></SmallTool>
            </div>
          </div>
        </div>
      </div>
      <footer className="flex h-[52px] shrink-0 items-start justify-between pl-2 pr-[7px] pt-[11px]">
        <FootTools />
        <button type="button" className="h-[22px] w-[82px] border border-[#b5b5b5] bg-[#e2e2e2] text-black">Schließen</button>
      </footer>
    </section>
  );
}

export default function App() {
  return (
    <div className={clsx(FONT, 'relative h-screen overflow-hidden text-[10px] leading-4 text-[#1e1e1e]')}>
      <MainWindow />
      <StressWindow />
      <SectionWindow />
      {/* callout arrow from the toolbar button to the opened dialog */}
      <svg viewBox="0 0 60 50" className="pointer-events-none absolute left-[634px] top-[134px] h-[50px] w-[60px]">
        <path d="M3 3 L46 37" stroke="#3f5cff" strokeWidth="5" />
        <path d="M57 46 L41 43 L50 31 Z" fill="#3f5cff" />
      </svg>
    </div>
  );
}
